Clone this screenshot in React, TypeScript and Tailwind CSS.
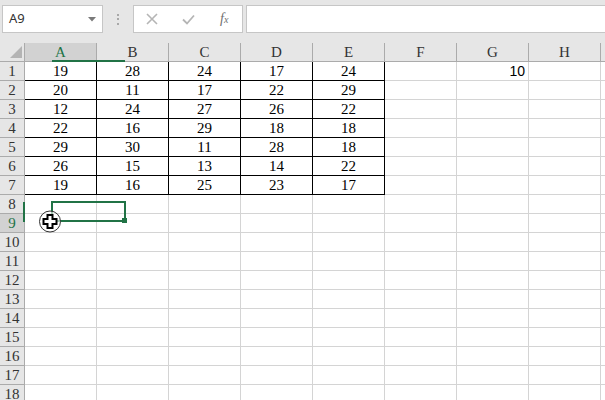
import React from "react";

const data: number[][] = [
  [19, 28, 24, 17, 24],
  [20, 11, 17, 22, 29],
  [12, 24, 27, 26, 22],
  [22, 16, 29, 18, 18],
  [29, 30, 11, 28, 18],
  [26, 15, 13, 14, 22],
  [19, 16, 25, 23, 17],
];

const cols = ["A", "B", "C", "D", "E", "F", "G", "H", ""];

function Cell({ r, c }: { r: number; c: number }) {
  const inTable = r < 7 && c < 5;
  let text: React.ReactNode = null;
  if (inTable) text = data[r][c];
  const isG1 = r === 0 && c === 6;
  return (
    <div
      className={
        "w-[72px] h-[19px] shrink-0 border-r border-b flex items-center bg-white " +
        (inTable ? "border-r-black border-b-black " : "border-r-[#d4d4d4] border-b-[#d4d4d4] ") +
        (isG1
          ? "justify-end pr-[3px] font-['Liberation_Sans',sans-serif] text-[14px] text-black"
          : "justify-center font-['Liberation_Serif',serif] text-[15px] text-black")
      }
    >
      {isG1 ? "10" : text}
    </div>
  );
}

export default function App() {
  const rows = Array.from({ length: 18 }, (_, i) => i);
  return (
    <div className="relative w-[605px] h-[400px] overflow-hidden bg-[#e6e6e6]">
      {/* Toolbar */}
      <div className="flex items-start h-[43px] pt-[5px] pl-[2px]">
        <div className="w-[101px] h-[28px] shrink-0 bg-white border border-[#c6c6c6] flex items-center justify-between pl-[6px] pr-[6px]">
          <span className="font-['Noto_Sans',sans-serif] text-[13px] text-[#333]">A9</span>
          <svg width="8" height="5" viewBox="0 0 8 5">
            <path d="M0 0 L8 0 L4 4.5 Z" fill="#7a7a7a" />
          </svg>
        </div>
        <div className="w-[30px] h-[28px] shrink-0 flex flex-col items-center justify-center gap-[2.5px]">
          <div className="w-[2px] h-[2px] bg-[#a8a8a8]" />
          <div className="w-[2px] h-[2px] bg-[#a8a8a8]" />
          <div className="w-[2px] h-[2px] bg-[#a8a8a8]" />
        </div>
        <div className="w-[110px] h-[28px] shrink-0 bg-white border border-[#c6c6c6] flex items-center">
          <div className="w-[37px] flex justify-center">
            <svg width="12" height="12" viewBox="0 0 12 12">
              <path d="M1 1 L11 11 M11 1 L1 11" stroke="#b5b5b5" strokeWidth="1.6" />
            </svg>
          </div>
          <div className="w-[36px] flex justify-center">
            <svg width="13" height="11" viewBox="0 0 13 11">
              <path d="M1 5.5 L5 9.5 L12 1.5" stroke="#b5b5b5" strokeWidth="1.8" fill="none" />
            </svg>
          </div>
          <div className="w-[36px] flex justify-center">
            <span className="font-['Liberation_Serif',serif] italic text-[14px] text-[#6f6f6f] leading-none">
              f<span className="text-[10px]">x</span>
            </span>
          </div>
        </div>
        <div className="ml-[3px] flex-1 h-[28px] bg-white border border-[#c6c6c6] border-r-0" />
      </div>

      {/* Column headers */}
      <div className="flex h-[19px] border-b border-[#ababab] bg-[#e6e6e6]">
        <div className="w-[25px] shrink-0 border-r border-[#ababab] relative">
          <svg className="absolute left-[10px] top-[3px]" width="12" height="12" viewBox="0 0 12 12">
            <path d="M12 0 L12 12 L0 12 Z" fill="#b4b4b4" />
          </svg>
        </div>
        {cols.map((c, i) => (
          <div
            key={i}
            className={
              "w-[72px] shrink-0 border-r border-[#ababab] flex items-center justify-center font-['Liberation_Serif',serif] text-[15px] " +
              (i === 0 ? "bg-[#d2d2d2] text-[#217346]" : "text-[#333]")
            }
          >
            {c}
          </div>
        ))}
      </div>

      {/* Rows */}
      {rows.map((r) => (
        <div key={r} className="flex h-[19px]">
          <div
            className={
              "w-[25px] h-[19px] shrink-0 border-r border-b border-[#ababab] flex items-center justify-center font-['Liberation_Serif',serif] text-[15px] " +
              (r === 8 ? "bg-[#d2d2d2] text-[#217346]" : "bg-[#e6e6e6] text-[#333]")
            }
          >
            {r + 1}
          </div>
          {cols.map((_, ci) => (
            <Cell key={ci} r={r} c={ci} />
          ))}
        </div>
      ))}

      {/* Overlays: selection mid-animation */}
      <div className="absolute left-[52px] top-[60px] w-[73px] h-[2px] bg-[#217346]" />
      <div className="absolute left-[23px] top-[202px] w-[2px] h-[20px] bg-[#217346]" />
      <div className="absolute left-[51px] top-[201px] w-[75px] h-[21px] border-2 border-[#217346]" />
      <div className="absolute left-[122px] top-[218px] w-[5px] h-[5px] bg-[#217346]" />

      {/* Cursor */}
      <svg className="absolute left-[38px] top-[210px]" width="24" height="24" viewBox="0 0 24 24">
        <circle cx="12" cy="11.5" r="10.5" fill="white" fillOpacity="0.6" stroke="#333" strokeWidth="1" />
        <path
          d="M9.5 5 H14.5 V9 H18.5 V14 H14.5 V18 H9.5 V14 H5.5 V9 H9.5 Z"
          fill="white"
          stroke="black"
          strokeWidth="2"
          strokeLinejoin="miter"
        />
      </svg>
    </div>
  );
}
